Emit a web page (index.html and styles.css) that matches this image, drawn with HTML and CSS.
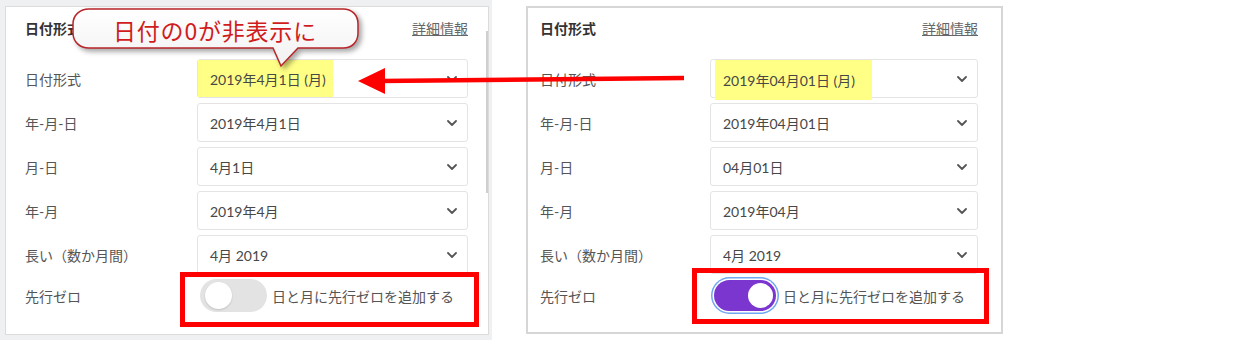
FILE: index.html
```html
<!DOCTYPE html>
<html lang="ja">
<head>
<meta charset="utf-8">
<title>日付形式</title>
<link rel="stylesheet" href="styles.css">
</head>
<body>
<div class="stage">
  <div class="shot-left">
    <div class="panel panel-left">
      <div class="head">
        <span class="title">日付形式</span>
        <a class="more">詳細情報</a>
      </div>
      <div class="row">
        <span class="label">日付形式</span>
        <div class="select"><span class="hl hl-left">2019年4月1日 (月)</span><svg class="chev" width="10" height="6" viewBox="0 0 10 6"><path d="M1 1 L5 5 L9 1" /></svg></div>
      </div>
      <div class="row">
        <span class="label">年-月-日</span>
        <div class="select"><span class="val">2019年4月1日</span><svg class="chev" width="10" height="6" viewBox="0 0 10 6"><path d="M1 1 L5 5 L9 1" /></svg></div>
      </div>
      <div class="row">
        <span class="label">月-日</span>
        <div class="select"><span class="val">4月1日</span><svg class="chev" width="10" height="6" viewBox="0 0 10 6"><path d="M1 1 L5 5 L9 1" /></svg></div>
      </div>
      <div class="row">
        <span class="label">年-月</span>
        <div class="select"><span class="val">2019年4月</span><svg class="chev" width="10" height="6" viewBox="0 0 10 6"><path d="M1 1 L5 5 L9 1" /></svg></div>
      </div>
      <div class="row">
        <span class="label">長い（数か月間）</span>
        <div class="select"><span class="val">4月 2019</span><svg class="chev" width="10" height="6" viewBox="0 0 10 6"><path d="M1 1 L5 5 L9 1" /></svg></div>
      </div>
      <div class="row row-toggle row-toggle-left">
        <span class="label">先行ゼロ</span>
        <div class="toggle">
          <span class="switch switch-off"><span class="knob"></span></span>
          <span class="ttext">日と月に先行ゼロを追加する</span>
        </div>
      </div>
      <div class="scrollbar"></div>
    </div>
  </div>

  <div class="panel panel-right">
    <div class="head">
      <span class="title">日付形式</span>
      <a class="more">詳細情報</a>
    </div>
    <div class="row">
      <span class="label">日付形式</span>
      <div class="select"><span class="hl hl-right">2019年04月01日 (月)</span><svg class="chev" width="10" height="6" viewBox="0 0 10 6"><path d="M1 1 L5 5 L9 1" /></svg></div>
    </div>
    <div class="row">
      <span class="label">年-月-日</span>
      <div class="select"><span class="val">2019年04月01日</span><svg class="chev" width="10" height="6" viewBox="0 0 10 6"><path d="M1 1 L5 5 L9 1" /></svg></div>
    </div>
    <div class="row">
      <span class="label">月-日</span>
      <div class="select"><span class="val">04月01日</span><svg class="chev" width="10" height="6" viewBox="0 0 10 6"><path d="M1 1 L5 5 L9 1" /></svg></div>
    </div>
    <div class="row">
      <span class="label">年-月</span>
      <div class="select"><span class="val">2019年04月</span><svg class="chev" width="10" height="6" viewBox="0 0 10 6"><path d="M1 1 L5 5 L9 1" /></svg></div>
    </div>
    <div class="row">
      <span class="label">長い（数か月間）</span>
      <div class="select"><span class="val">4月 2019</span><svg class="chev" width="10" height="6" viewBox="0 0 10 6"><path d="M1 1 L5 5 L9 1" /></svg></div>
    </div>
    <div class="row row-toggle row-toggle-right">
      <span class="label">先行ゼロ</span>
      <div class="toggle">
        <span class="switch switch-on"><span class="knob"></span></span>
        <span class="ttext">日と月に先行ゼロを追加する</span>
      </div>
    </div>
  </div>

  <div class="redbox redbox-left"></div>
  <div class="redbox redbox-right"></div>

  <svg class="arrow" width="1233" height="350" viewBox="0 0 1233 350">
    <line x1="684" y1="78" x2="380" y2="81" />
    <polygon points="358,81 385,68 385,94" />
  </svg>

  <div class="callout">
    <svg class="bubble" width="320" height="80" viewBox="0 0 320 80">
      <defs>
        <linearGradient id="bfill" x1="0" y1="0" x2="0" y2="1">
          <stop offset="0" stop-color="#ffffff"/>
          <stop offset="1" stop-color="#f1f1f1"/>
        </linearGradient>
      </defs>
      <path d="M29 9 H283 C292 9 298 15 298 24 V33 C298 42 292 48 283 48 H238 L221 66 L213 48 H29 C20 48 13 42 13 33 V24 C13 15 20 9 29 9 Z" />
    </svg>
    <span class="callout-text">日付の0が非表示に</span>
  </div>
</div>
</body>
</html>
```

FILE: styles.css
```css
* { box-sizing: border-box; }

body {
  margin: 0;
  background: #ffffff;
  font-family: Lato, "Noto Sans CJK JP", sans-serif;
  color: #444;
}

.stage {
  position: relative;
  width: 1233px;
  height: 350px;
  display: flex;
  align-items: flex-start;
  overflow: hidden;
}

.shot-left {
  width: 492px;
  height: 340px;
  background: #eff0f2;
  padding: 6px 3px 5px 5px;
}

.panel {
  position: relative;
  background: #ffffff;
}

.panel-left {
  height: 100%;
  border: 1px solid #dcdcdc;
  padding: 11px 20px 0 19px;
}

.panel-right {
  margin-left: 34px;
  margin-top: 6px;
  width: 477px;
  height: 328px;
  border: 2px solid #d6d6d6;
  padding: 10px 23px 0 12px;
}

.head {
  display: flex;
  justify-content: space-between;
  align-items: center;
  height: 20px;
  margin-bottom: 21px;
}

.title {
  font-size: 14px;
  font-weight: 700;
  color: #333;
}

.more {
  font-size: 14px;
  color: #666;
  text-decoration: underline;
}

.row {
  display: grid;
  grid-template-columns: 172px 1fr;
  align-items: center;
  height: 39px;
  margin-bottom: 5px;
}

.panel-right .row {
  grid-template-columns: 170px 1fr;
}

.label {
  font-size: 14px;
  color: #555;
}

.select {
  height: 39px;
  border: 1px solid #e4e4e4;
  border-radius: 3px;
  display: flex;
  align-items: center;
  justify-content: space-between;
  padding: 0 10px 0 12px;
  font-size: 14px;
  color: #474747;
}

.chev path {
  fill: none;
  stroke: #555;
  stroke-width: 1.8;
  stroke-linecap: round;
  stroke-linejoin: round;
}

.hl {
  align-self: stretch;
  display: flex;
  align-items: center;
  background: #ffff85;
}

.hl-left {
  margin-left: -12px;
  padding: 0 7px 0 12px;
}

.hl-right {
  margin-left: -8px;
  margin-bottom: -3px;
  padding: 0 17px 0 8px;
}

.row-toggle-left {
  height: 33px;
  margin-top: 4px;
}

.row-toggle-right {
  height: 37px;
  margin-top: -2px;
}

.toggle {
  display: flex;
  align-items: center;
}

.switch {
  position: relative;
  display: block;
  flex: none;
}

.switch-off {
  width: 67px;
  height: 33px;
  margin-left: 3px;
  border-radius: 17px;
  background: #e3e3e3;
}

.switch-off .knob {
  position: absolute;
  left: 5px;
  top: 3px;
  width: 27px;
  height: 27px;
  border-radius: 50%;
  background: #ffffff;
  box-shadow: 0 1px 2px rgba(0, 0, 0, 0.15);
}

.switch-on {
  width: 62px;
  height: 31px;
  margin: 0 3px 0 4px;
  border-radius: 16px;
  background: #7a36cf;
  box-shadow: 0 0 0 1.5px #ffffff, 0 0 0 3px #6fa6f2;
}

.switch-on .knob {
  position: absolute;
  right: 3px;
  top: 3px;
  width: 25px;
  height: 25px;
  border-radius: 50%;
  background: #ffffff;
}

.ttext {
  font-size: 14px;
  color: #555;
  margin-left: 5px;
}

.row-toggle-right .ttext {
  margin-left: 4px;
}

.scrollbar {
  position: absolute;
  right: 0;
  top: 24px;
  width: 2px;
  height: 162px;
  background: #cfcfcf;
}

.redbox {
  position: absolute;
  border: 5px solid #ff0000;
}

.redbox-left {
  left: 180px;
  top: 272px;
  width: 299px;
  height: 55px;
}

.redbox-right {
  left: 692px;
  top: 268px;
  width: 297px;
  height: 56px;
}

.arrow {
  position: absolute;
  left: 0;
  top: 0;
  pointer-events: none;
}

.arrow line {
  stroke: #ff0000;
  stroke-width: 4.5;
}

.arrow polygon {
  fill: #ff0000;
}

.callout {
  position: absolute;
  left: 60px;
  top: 0;
  width: 320px;
  height: 80px;
}

.bubble {
  display: block;
  filter: drop-shadow(3px 3px 2.5px rgba(0, 0, 0, 0.35));
}

.bubble path {
  fill: url(#bfill);
  stroke: #b8262a;
  stroke-width: 1.5;
}

.callout-text {
  position: absolute;
  left: 53px;
  top: 14px;
  font-family: "Noto Sans CJK JP", sans-serif;
  font-size: 23px;
  line-height: 32px;
  letter-spacing: 0.8px;
  color: #d01c1c;
  white-space: nowrap;
}
```
